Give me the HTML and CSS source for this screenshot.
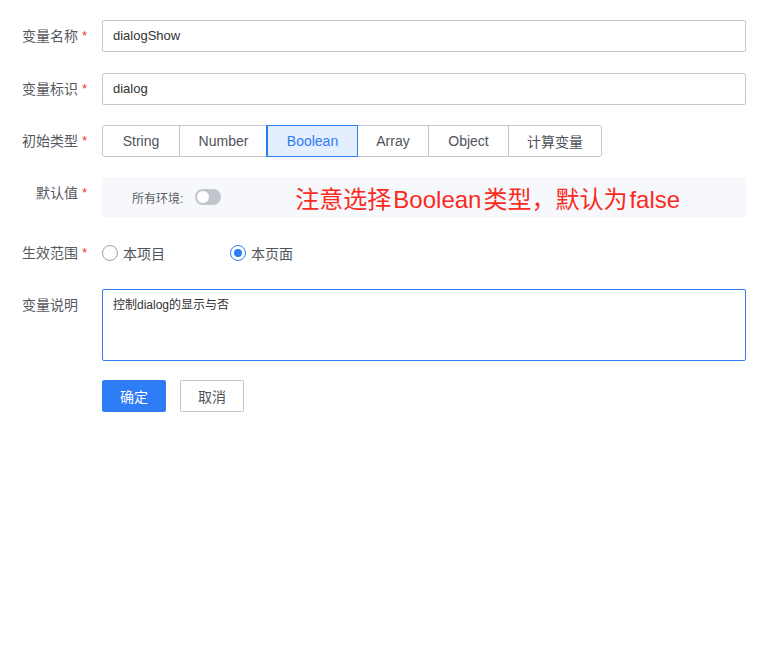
FILE: index.html
```html
<!DOCTYPE html>
<html lang="zh-CN">
<head>
<meta charset="utf-8">
<title>变量</title>
<link rel="stylesheet" href="styles.css">
</head>
<body>
<form class="form">
  <div class="row">
    <label class="label req">变量名称</label>
    <div class="field"><div class="input">dialogShow</div></div>
  </div>
  <div class="row row-shift">
    <label class="label req">变量标识</label>
    <div class="field"><div class="input">dialog</div></div>
  </div>
  <div class="row">
    <label class="label req">初始类型</label>
    <div class="field">
      <div class="seg">
        <span class="seg-item w-string">String</span>
        <span class="seg-item w-number">Number</span>
        <span class="seg-item w-boolean active">Boolean</span>
        <span class="seg-item w-array">Array</span>
        <span class="seg-item w-object">Object</span>
        <span class="seg-item w-calc">计算变量</span>
      </div>
    </div>
  </div>
  <div class="row">
    <label class="label req">默认值</label>
    <div class="field">
      <div class="default-box">
        <span class="env">所有环境:</span>
        <span class="switch"><span class="knob"></span></span>
        <span class="note">注意选择<span class="lat">Boolean</span>类型，默认为<span class="lat">false</span></span>
      </div>
    </div>
  </div>
  <div class="row row-radio row-shift">
    <label class="label req">生效范围</label>
    <div class="field radios">
      <span class="radio"><span class="circle"></span>本项目</span>
      <span class="radio checked"><span class="circle"></span>本页面</span>
    </div>
  </div>
  <div class="row row-shift">
    <label class="label">变量说明</label>
    <div class="field"><div class="textarea">控制dialog的显示与否</div></div>
  </div>
  <div class="row row-actions">
    <span class="label"></span>
    <div class="field actions">
      <button type="button" class="btn primary">确定</button>
      <button type="button" class="btn">取消</button>
    </div>
  </div>
</form>
</body>
</html>
```

FILE: styles.css
```css
html, body {
  margin: 0;
  padding: 0;
  background: #ffffff;
}
body {
  font-family: "Liberation Sans", "Noto Sans CJK SC", sans-serif;
  font-size: 14px;
  color: #5b5f66;
}
.form {
  display: flex;
  flex-direction: column;
  gap: 20px;
  padding-top: 20px;
  width: 746px;
}
.row {
  display: flex;
  align-items: flex-start;
}
.row-shift {
  margin-top: 1px;
}
.row-actions {
  margin-top: -1px;
}
.label {
  width: 102px;
  flex: none;
  box-sizing: border-box;
  padding-right: 24px;
  text-align: right;
  line-height: 32px;
  height: 32px;
  color: #55595f;
  font-size: 14px;
  position: relative;
}
.row-radio .label {
  line-height: 30px;
  height: 30px;
}
.label.req::after {
  content: "*";
  color: #f5222d;
  font-size: 12px;
  position: absolute;
  right: 15px;
  top: 0;
}
.field {
  flex: 1;
}
.input {
  height: 32px;
  box-sizing: border-box;
  border: 1px solid #c4c7cd;
  border-radius: 2px;
  padding: 0 10px;
  line-height: 30px;
  font-size: 13px;
  color: #333333;
}
.seg {
  display: inline-flex;
  height: 32px;
  box-sizing: border-box;
  border: 1px solid #c4c7cd;
  border-radius: 3px;
}
.seg-item {
  display: flex;
  align-items: center;
  justify-content: center;
  border-left: 1px solid #c4c7cd;
  font-size: 14px;
  color: #4f535a;
  box-sizing: border-box;
}
.seg-item:first-child { border-left: none; }
.w-string { width: 76px; }
.w-number { width: 88px; }
.w-boolean { width: 90px; }
.w-array { width: 71px; }
.w-object { width: 80px; }
.w-calc { width: 93px; }
.seg-item.active {
  background: #e3eeff;
  color: #2e7cf6;
  outline: 1px solid #2e7cf6;
  border-left-color: #2e7cf6;
  position: relative;
  z-index: 1;
}
.default-box {
  height: 40px;
  background: #f7f8fc;
  display: flex;
  align-items: center;
  padding-left: 30px;
}
.env {
  font-size: 12px;
  color: #5b5f66;
  margin-right: 12px;
}
.switch {
  width: 26px;
  height: 16px;
  border-radius: 8px;
  background: #c0c4cc;
  position: relative;
  flex: none;
}
.knob {
  position: absolute;
  left: 2px;
  top: 2px;
  width: 12px;
  height: 12px;
  border-radius: 50%;
  background: #ffffff;
}
.note {
  margin-left: 74px;
  font-size: 24px;
  color: #fa2a1e;
  white-space: nowrap;
}
.note .lat {
  margin: 0 2px;
}
.radios {
  display: flex;
  align-items: center;
  height: 30px;
}
.radio {
  display: inline-flex;
  align-items: center;
  font-size: 14px;
  color: #4f535a;
  width: 128px;
}
.circle {
  width: 16px;
  height: 16px;
  box-sizing: border-box;
  border: 1px solid #9ea2aa;
  border-radius: 50%;
  margin-right: 5px;
  position: relative;
  background: #fff;
}
.radio.checked .circle {
  border-color: #2e7cf6;
}
.radio.checked .circle::after {
  content: "";
  position: absolute;
  left: 3px;
  top: 3px;
  width: 8px;
  height: 8px;
  border-radius: 50%;
  background: #2e7cf6;
}
.textarea {
  height: 72px;
  box-sizing: border-box;
  border: 1px solid #2e7cf6;
  border-radius: 2px;
  padding: 7px 10px;
  font-size: 12px;
  line-height: 16px;
  color: #333333;
}
.actions {
  display: flex;
  gap: 14px;
}
.btn {
  width: 64px;
  height: 32px;
  box-sizing: border-box;
  border: 1px solid #c4c7cd;
  border-radius: 2px;
  background: #ffffff;
  font-family: inherit;
  font-size: 14px;
  color: #4f535a;
  padding: 0;
}
.btn.primary {
  background: #2e7cf6;
  border-color: #2e7cf6;
  color: #ffffff;
}
```
